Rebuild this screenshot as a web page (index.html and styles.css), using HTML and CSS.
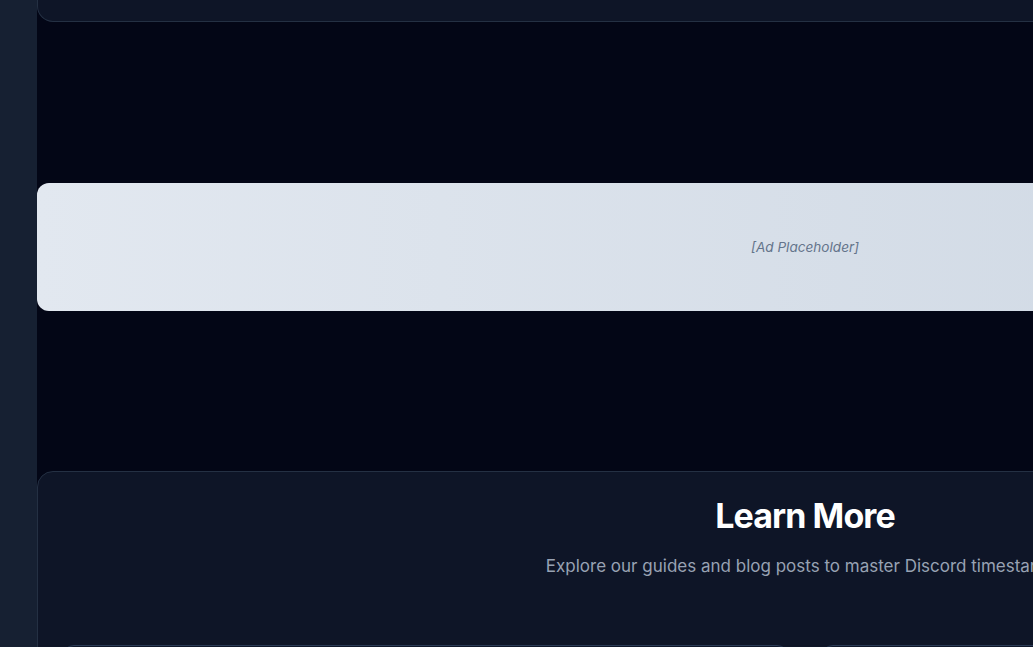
FILE: index.html
```html
<!DOCTYPE html>
<html lang="en">
<head>
<meta charset="utf-8">
<title>Discord Timestamps</title>
<link rel="stylesheet" href="styles.css">
</head>
<body>
<div class="layout">
  <aside class="sidebar"></aside>
  <main class="main">
    <section class="card top-card"></section>
    <div class="ad">
      <span class="ad-text">[Ad Placeholder]</span>
    </div>
    <section class="card learn">
      <h2 class="learn-title">Learn More</h2>
      <p class="learn-sub">Explore our guides and blog posts to master Discord timestamps</p>
      <div class="learn-grid">
        <div class="learn-item"></div>
        <div class="learn-item"></div>
      </div>
    </section>
  </main>
</div>
</body>
</html>
```
FILE: styles.css
```css
* { box-sizing: border-box; }
html, body {
  margin: 0;
  padding: 0;
  background: #030616;
  font-family: Inter, "Noto Sans", sans-serif;
  overflow: hidden;
  height: 647px;
}
.layout {
  display: flex;
  width: 1573px;
  min-height: 647px;
}
.sidebar {
  width: 37px;
  flex: none;
  background: #162032;
}
.main {
  width: 1536px;
  flex: none;
  display: flex;
  flex-direction: column;
}
.main > * { flex: none; }
.card {
  background: #0e1527;
  border: 1px solid #243043;
  border-radius: 16px;
}
.top-card {
  height: 22px;
  border-top: none;
  border-radius: 0 0 16px 16px;
}
.ad {
  height: 128px;
  margin: 161px 0 160px;
  border-radius: 12px;
  background: linear-gradient(to right, #e2e8f0, #cbd5e1);
  display: flex;
  align-items: center;
  justify-content: center;
}
.ad-text {
  font-style: italic;
  font-size: 13.6px;
  color: #64748b;
}
.learn {
  padding: 24px;
  height: 400px;
}
.learn-title {
  margin: 0;
  text-align: center;
  font-size: 34px;
  line-height: 40px;
  font-weight: 700;
  color: #ffffff;
  letter-spacing: -0.9px;
}
.learn-sub {
  margin: 16px 0 0;
  text-align: center;
  font-size: 17px;
  line-height: 28px;
  color: #98a2b3;
}
.learn-grid {
  margin-top: 65px;
  display: grid;
  grid-template-columns: 1fr 1fr;
  gap: 32px;
}
.learn-item {
  height: 160px;
  background: #0f172a;
  border: 1px solid #2a3a55;
  border-radius: 12px;
}
```
